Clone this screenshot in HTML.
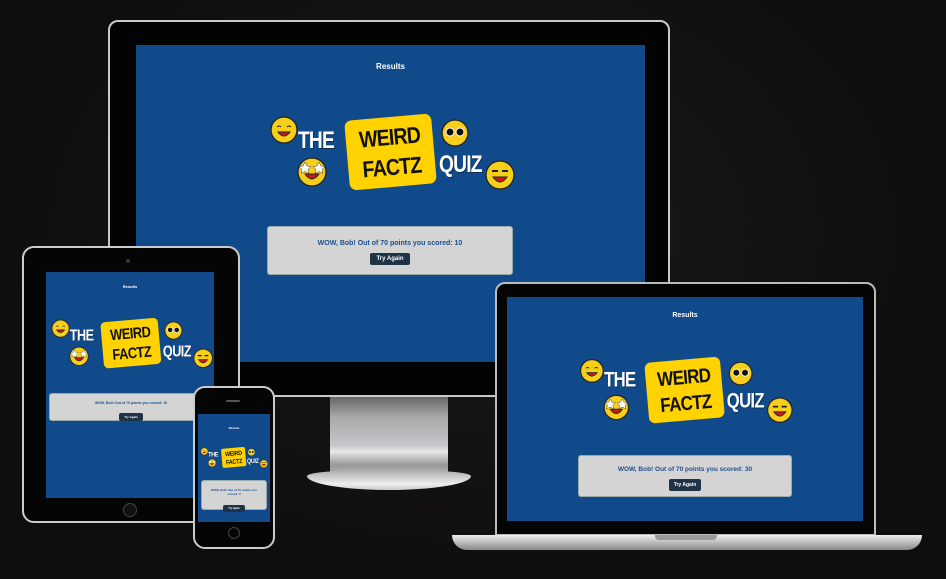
<!DOCTYPE html>
<html><head><meta charset="utf-8"><style>
*{margin:0;padding:0;box-sizing:border-box}
body{width:946px;height:579px;overflow:hidden;background:radial-gradient(ellipse at 50% 40%,#1c1b1b 0%,#0f0e0e 70%);font-family:"Liberation Sans",sans-serif;position:relative}
.abs{position:absolute}
.scr{position:absolute;background:#114a8a;overflow:hidden}
.res{position:absolute;left:0;right:0;text-align:center;color:#fff;font-weight:bold}
.logo{position:absolute;width:250px;height:80px;transform-origin:0 0}
.logo .t{position:absolute;color:#fff;font-weight:900;font-size:24px;letter-spacing:-1px;text-shadow:1px 1px 0 #0a2d55;transform:scaleX(.8);transform-origin:0 0}
.logo .box{position:absolute;left:79px;top:3px;width:87px;height:70px;background:#ffd200;border-radius:7px;transform:rotate(-5deg);text-align:center;color:#111;font-weight:900;font-size:23px;line-height:30px;padding-top:5px;letter-spacing:-1px}
.logo .box span{display:inline-block;transform:scaleX(.85)}
.logo svg{position:absolute}
.card{position:absolute;background:#d4d4d4;border-radius:3px;border:1px solid #9aa;text-align:center;color:#1e4f8c;font-weight:bold}
.btn{display:inline-block;background:#1f3346;color:#fff;font-weight:bold;border-radius:2px}
</style></head><body>

<!-- MONITOR -->
<div class="abs" style="left:108px;top:20px;width:562px;height:377px;background:#030303;border:2px solid #c9c9c9;border-radius:10px"></div>
<div class="abs" style="left:330px;top:397px;width:118px;height:80px;background:linear-gradient(180deg,#666,#aaa 25%,#c4c5c8 60%,#e8e8ea 68%,#999 85%,#bbb)"></div>
<div class="abs" style="left:307px;top:470px;width:164px;height:20px;border-radius:40% 40% 50% 50%/30% 30% 70% 70%;background:linear-gradient(180deg,#aaa,#eee 70%,#ccc)"></div>
<div class="scr" style="left:136px;top:45px;width:509px;height:317px">
 <div class="res" style="top:17px;font-size:8px">Results</div>
 <div class="card" style="left:131px;top:181px;width:246px;height:49px">
  <div style="font-size:7px;margin-top:13px">WOW, Bob! Out of 70 points you scored: 10</div>
  <div class="btn" style="font-size:6px;margin-top:5px;padding:3px 6px">Try Again</div>
 </div>
</div>

<!-- TABLET -->
<div class="abs" style="left:22px;top:246px;width:218px;height:277px;background:#050505;border:2px solid #ccc;border-radius:12px"></div>
<div class="abs" style="left:126px;top:259px;width:4px;height:4px;border-radius:50%;background:#334"></div>
<div class="abs" style="left:123px;top:503px;width:14px;height:14px;border-radius:50%;border:1px solid #444;background:#111"></div>
<div class="scr" style="left:46px;top:272px;width:168px;height:226px">
 <div class="res" style="top:12px;font-size:4px">Results</div>
 <div class="card" style="left:3px;top:121px;width:164px;height:28px">
  <div style="font-size:3.5px;margin-top:7px">WOW, Bob! Out of 70 points you scored: 10</div>
  <div class="btn" style="font-size:3px;margin-top:3px;padding:2px 5px">Try Again</div>
 </div>
</div>

<!-- LAPTOP -->
<div class="abs" style="left:495px;top:282px;width:381px;height:254px;background:#050505;border:2px solid #bbb;border-radius:10px 10px 0 0"></div>
<div class="abs" style="left:452px;top:535px;width:470px;height:15px;background:linear-gradient(180deg,#eee,#888);border-radius:0 0 20px 20px"></div>
<div class="abs" style="left:655px;top:535px;width:62px;height:5px;background:#999;border-radius:0 0 4px 4px"></div>
<div class="scr" style="left:507px;top:297px;width:356px;height:224px">
 <div class="res" style="top:15px;font-size:7px">Results</div>
 <div class="card" style="left:71px;top:158px;width:214px;height:42px">
  <div style="font-size:6.5px;margin-top:10px">WOW, Bob! Out of 70 points you scored: 30</div>
  <div class="btn" style="font-size:5px;margin-top:5px;padding:3px 5px">Try Again</div>
 </div>
</div>

<!-- PHONE -->
<div class="abs" style="left:193px;top:386px;width:82px;height:163px;background:#050505;border:2px solid #ccc;border-radius:12px"></div>
<div class="abs" style="left:226px;top:400px;width:14px;height:2px;background:#555;border-radius:1px"></div>
<div class="abs" style="left:228px;top:527px;width:12px;height:12px;border-radius:50%;border:1px solid #444"></div>
<div class="scr" style="left:198px;top:414px;width:72px;height:108px">
 <div class="res" style="top:12px;font-size:3px">Results</div>
 <div class="card" style="left:3px;top:66px;width:66px;height:30px">
  <div style="font-size:3px;margin-top:7px;padding:0 6px">WOW, Bob! Out of 70 points you scored: 0</div>
  <div class="btn" style="font-size:2.5px;margin-top:2px;padding:2px 5px">Try Again</div>
 </div>
</div>

<!-- LOGOS -->
<div class="logo" id="L1" style="left:268px;top:114px">
 <svg style="left:2px;top:2px" width="28" height="28" viewBox="0 0 28 28"><circle cx="14" cy="14" r="13" fill="#f5cf1a" stroke="#222" stroke-width="1.3"/><path d="M8 16q6 8 12 0z" fill="#c81a1a" stroke="#222"/><path d="M7 11q2-2 4 0M17 11q2-2 4 0" stroke="#222" fill="none"/></svg>
 <div class="t" style="left:30px;top:13px">THE</div>
 <div class="box"><span>WEIRD</span><br><span>FACTZ</span></div>
 <svg style="left:173px;top:5px" width="28" height="28" viewBox="0 0 28 28"><circle cx="14" cy="14" r="13" fill="#f5cf1a" stroke="#222" stroke-width="1.3"/><circle cx="9" cy="13" r="4" fill="#111" stroke="#fff"/><circle cx="19" cy="13" r="4" fill="#111" stroke="#fff"/></svg>
 <div class="t" style="left:171px;top:37px">QUIZ</div>
 <svg style="left:217px;top:46px" width="30" height="30" viewBox="0 0 30 30"><circle cx="15" cy="15" r="14" fill="#f5cf1a" stroke="#222" stroke-width="1.3"/><path d="M8 17q7 10 14 0z" fill="#c81a1a" stroke="#222"/><path d="M7 11h6M17 11h6" stroke="#222" stroke-width="2"/></svg>
 <svg style="left:29px;top:43px" width="30" height="30" viewBox="0 0 30 30"><circle cx="15" cy="15" r="14" fill="#f5cf1a" stroke="#222" stroke-width="1.3"/><path d="M8 17q7 10 14 0z" fill="#c81a1a" stroke="#222"/><path d="M8 5l2 4 4 .5-3 3 1 4-4-2-4 2 1-4-3-3 4-.5zM22 5l2 4 4 .5-3 3 1 4-4-2-4 2 1-4-3-3 4-.5z" fill="#fff" stroke="#333" stroke-width=".5"/></svg>
</div>
<script>
var L=document.getElementById('L1');
[[578,357,0.87],[50,318,0.66],[200,447,0.275]].forEach(function(a){var c=L.cloneNode(true);c.id='';c.style.left=a[0]+'px';c.style.top=a[1]+'px';c.style.transform='scale('+a[2]+')';document.body.appendChild(c);});
</script>
</body></html>
